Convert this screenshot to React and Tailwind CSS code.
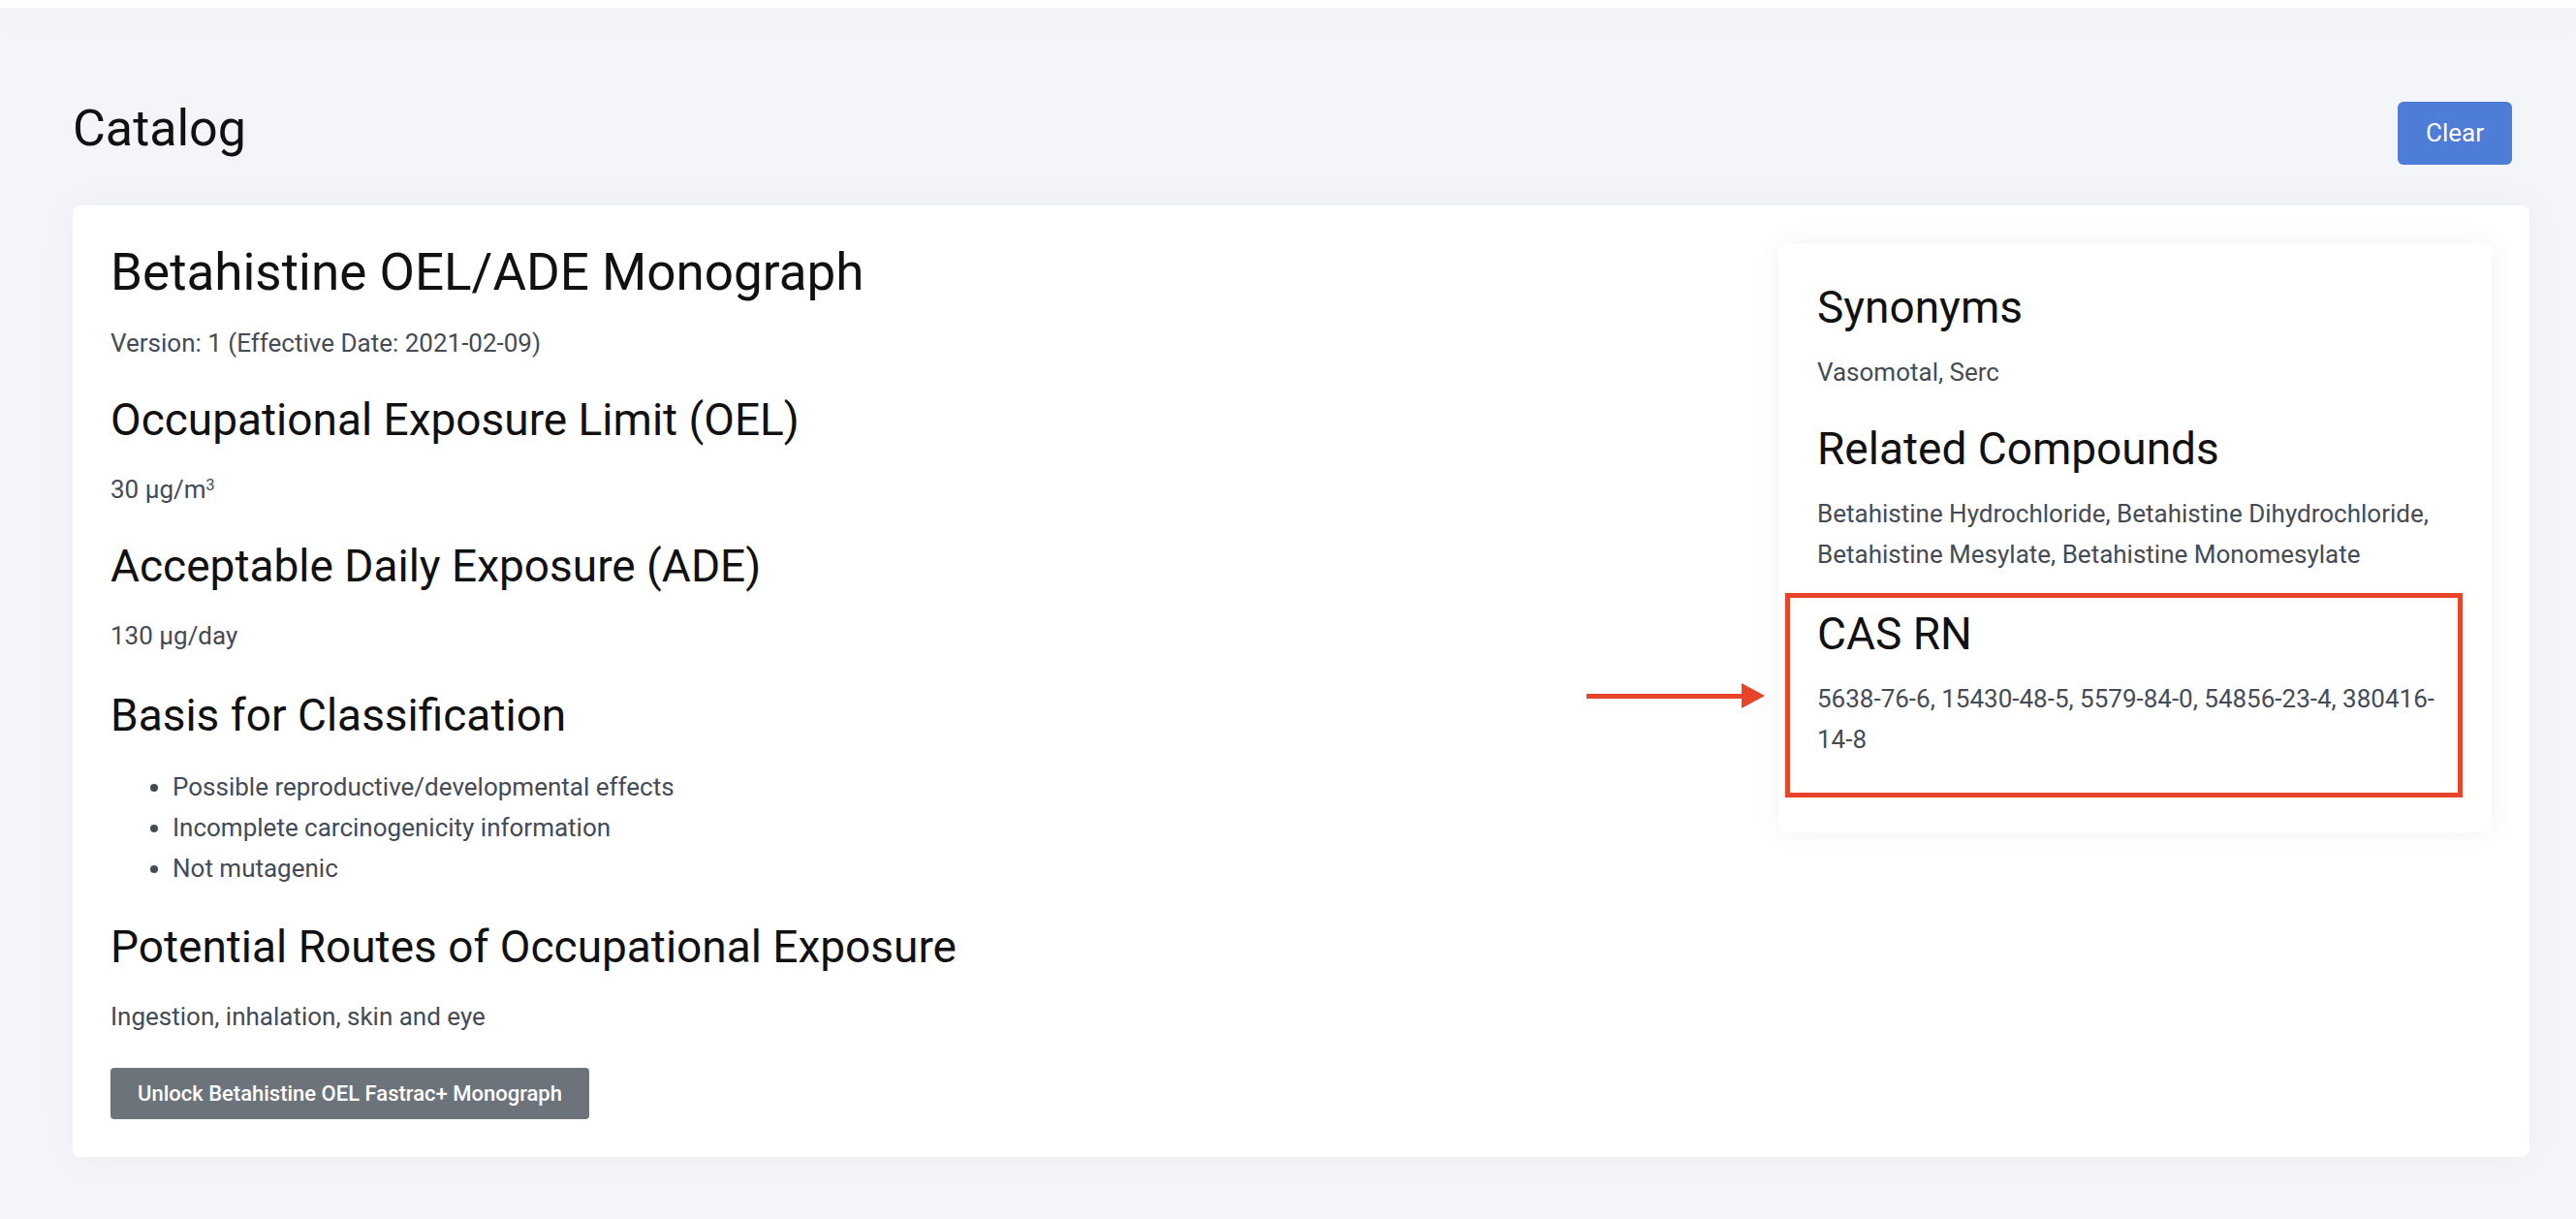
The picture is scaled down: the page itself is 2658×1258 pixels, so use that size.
import React from "react";

const font = { fontFamily: "Roboto, 'Liberation Sans', sans-serif" };

function Heading({ children, className = "" }) {
  return (
    <h2 className={`text-[46px] leading-[53px] font-normal text-[#111111] mb-[24px] ${className}`}>
      {children}
    </h2>
  );
}

function Text({ children, className = "" }) {
  return <p className={`text-[26px] leading-[42px] text-[#454b55] mb-[32px] ${className}`}>{children}</p>;
}

export default function App() {
  return (
    <div className="min-h-screen bg-[#f4f5f9]" style={font}>
      <div className="h-[8px] bg-white shadow-[0_6px_40px_rgba(0,0,0,0.07)]" />

      <div className="pl-[75px] pr-[48px]">
        <div className="flex items-center justify-between pt-[97px] mb-[42px]">
          <h1 className="text-[52px] leading-[52px] font-normal text-[#111111] mb-[9px]">Catalog</h1>
          <button className="h-[65px] px-[29px] mr-[18px] rounded-[6px] bg-[#4d7dd6] text-white text-[26px]">
            Clear
          </button>
        </div>

        <div className="bg-white rounded-[8px] shadow-[0_0_40px_rgba(0,0,0,0.04)] p-[39px] flex gap-[40px]">
          <div className="flex-1">
            <h1 className="text-[53px] leading-[60px] font-normal text-[#111111] mb-[22px]">
              Betahistine OEL/ADE Monograph
            </h1>
            <Text>Version: 1 (Effective Date: 2021-02-09)</Text>

            <Heading>Occupational Exposure Limit (OEL)</Heading>
            <Text>
              30 µg/m<sup className="text-[16px]">3</sup>
            </Text>

            <Heading>Acceptable Daily Exposure (ADE)</Heading>
            <Text className="!mb-[35px]">130 µg/day</Text>

            <Heading className="!mb-[26px]">Basis for Classification</Heading>
            <ul className="list-disc pl-[64px] text-[26px] leading-[42px] text-[#454b55] mb-[34px]">
              <li>Possible reproductive/developmental effects</li>
              <li>Incomplete carcinogenicity information</li>
              <li>Not mutagenic</li>
            </ul>

            <Heading>Potential Routes of Occupational Exposure</Heading>
            <Text className="!mb-[32px]">Ingestion, inhalation, skin and eye</Text>

            <button className="h-[53px] px-[28px] rounded-[4px] bg-[#6d737b] text-white text-[22px] font-medium">
              Unlock Betahistine OEL Fastrac+ Monograph
            </button>
          </div>

          <div className="w-[736px] self-start">
            <div className="bg-white rounded-[8px] shadow-[0_0_30px_rgba(0,0,0,0.06)] px-[40px] pt-[40px] pb-[43px]">
              <Heading className="!mb-[19px]">Synonyms</Heading>
              <Text>Vasomotal, Serc</Text>

              <Heading className="!mb-[19px]">Related Compounds</Heading>
              <Text className="!mb-[35px]">
                Betahistine Hydrochloride, Betahistine Dihydrochloride,
                <br />
                Betahistine Mesylate, Betahistine Monomesylate
              </Text>

              <div className="relative">
                <div className="absolute -left-[33px] -right-[10px] -top-[16px] -bottom-[39px] border-[5px] border-[#e8442a] pointer-events-none" />
                <div className="absolute -left-[238px] top-[77px] flex items-center">
                  <div className="w-[160px] h-[5px] bg-[#e8442a]" />
                  <svg width="24" height="26" viewBox="0 0 24 26">
                    <polygon points="0,0 24,13 0,26" fill="#e8442a" />
                  </svg>
                </div>
                <Heading className="!mb-[19px]">CAS RN</Heading>
                <Text>
                  5638-76-6, 15430-48-5, 5579-84-0, 54856-23-4, 380416-
                  <br />
                  14-8
                </Text>
              </div>
            </div>
          </div>
        </div>
      </div>
    </div>
  );
}
